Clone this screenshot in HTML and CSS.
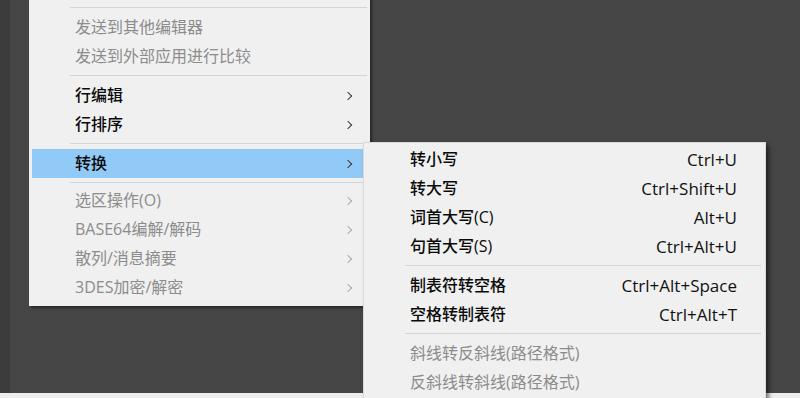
FILE: index.html
```html
<!DOCTYPE html>
<html lang="zh-CN">
<head>
<meta charset="utf-8">
<title>菜单</title>
<link rel="stylesheet" href="styles.css">
</head>
<body>
<div class="desk">
  <div class="edge"></div>
  <div class="area"></div>
</div>
<div class="bottom-strip"></div>

<div class="menu main">
  <div class="item"><span class="label"></span></div>
  <div class="sep"></div>
  <div class="item disabled"><span class="label">发送到其他编辑器</span></div>
  <div class="item disabled"><span class="label">发送到外部应用进行比较</span></div>
  <div class="sep"></div>
  <div class="item"><span class="label">行编辑</span><span class="arrow"></span></div>
  <div class="item"><span class="label">行排序</span><span class="arrow"></span></div>
  <div class="sep"></div>
  <div class="item active"><span class="label">转换</span><span class="arrow"></span></div>
  <div class="sep narrow"></div>
  <div class="item disabled"><span class="label">选区操作(O)</span><span class="arrow"></span></div>
  <div class="item disabled"><span class="label">BASE64编解/解码</span><span class="arrow"></span></div>
  <div class="item disabled"><span class="label">散列/消息摘要</span><span class="arrow"></span></div>
  <div class="item disabled"><span class="label">3DES加密/解密</span><span class="arrow"></span></div>
</div>

<div class="menu sub">
  <div class="item"><span class="label">转小写</span><span class="key">Ctrl+U</span></div>
  <div class="item"><span class="label">转大写</span><span class="key">Ctrl+Shift+U</span></div>
  <div class="item"><span class="label">词首大写(C)</span><span class="key">Alt+U</span></div>
  <div class="item"><span class="label">句首大写(S)</span><span class="key">Ctrl+Alt+U</span></div>
  <div class="sep"></div>
  <div class="item"><span class="label">制表符转空格</span><span class="key">Ctrl+Alt+Space</span></div>
  <div class="item"><span class="label">空格转制表符</span><span class="key">Ctrl+Alt+T</span></div>
  <div class="sep"></div>
  <div class="item disabled"><span class="label">斜线转反斜线(路径格式)</span></div>
  <div class="item disabled"><span class="label">反斜线转斜线(路径格式)</span></div>
</div>
</body>
</html>
```

FILE: styles.css
```css
html, body {
  margin: 0;
  padding: 0;
  width: 800px;
  height: 398px;
  overflow: hidden;
  background: #454545;
  font-family: "Open Sans", "Noto Sans CJK SC", sans-serif;
  font-size: 16px;
}

.desk {
  display: flex;
  height: 393px;
}

.edge {
  width: 10px;
  background: #3c3c3c;
}

.area {
  flex: 1;
  background: #464646;
}

.bottom-strip {
  height: 5px;
  background: #ededed;
}

.menu {
  position: absolute;
  background: #f0f0f0;
  box-sizing: border-box;
}

.main {
  left: 29px;
  top: -26px;
  width: 341px;
  padding: 0 3px 4px 3px;
  box-shadow: 2px 2px 3px rgba(0, 0, 0, 0.45);
}

.sub {
  left: 363px;
  top: 142px;
  width: 403px;
  height: 270px;
  padding: 2px 28px 0 46px;
  border: 1px solid #d9d9d9;
  box-shadow: 3px 3px 4px rgba(0, 0, 0, 0.5);
}

.item {
  height: 29px;
  display: flex;
  align-items: center;
  color: #0a0a0a;
  font-weight: 500;
  line-height: 29px;
}

.main .item {
  padding: 0 13px 0 43px;
}

.main .item.active {
  background: #91c9f7;
}

.item.disabled {
  color: #8c8c8c;
  font-weight: 400;
}

.label {
  flex: 1;
  white-space: nowrap;
}

.key {
  white-space: nowrap;
  font-size: 17px;
  font-weight: 400;
  color: #111;
}

.arrow {
  width: 5px;
  height: 5px;
  border-right: 1.5px solid #3a3a3a;
  border-top: 1.5px solid #3a3a3a;
  transform: rotate(45deg);
  margin-right: 3px;
}

.item.disabled .arrow {
  border-color: #ababab;
}

.sep {
  height: 10px;
  position: relative;
}

.sep.narrow {
  height: 8px;
}

.sep::after {
  content: "";
  position: absolute;
  left: 0;
  right: 0;
  top: 4px;
  height: 1px;
  background: #d4d4d4;
}

.main .sep {
  margin-left: 38px;
}

.sub .sep {
  margin-left: -5px;
  margin-right: -24px;
}
```
